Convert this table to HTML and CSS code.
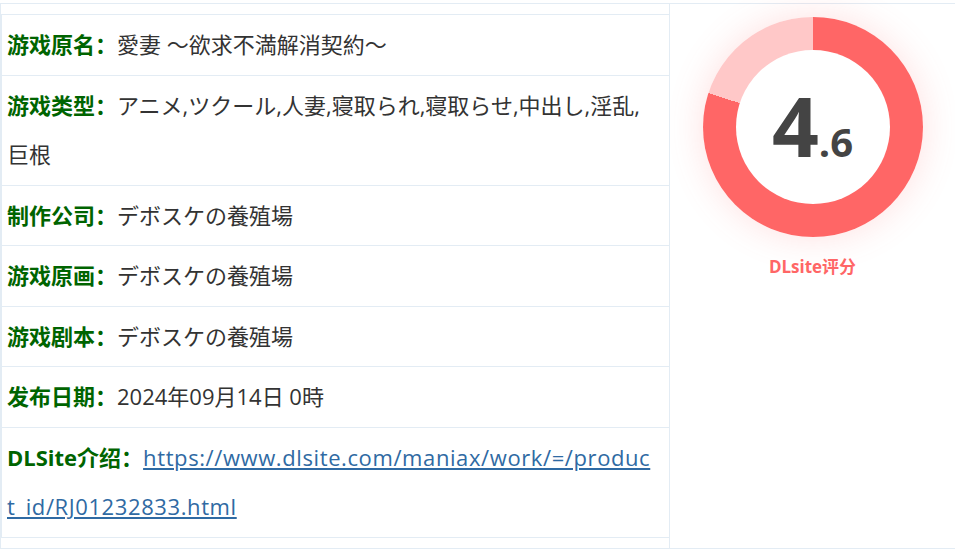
FILE: index.html
```html
<!DOCTYPE html>
<html lang="zh-CN">
<head>
	<meta charset="UTF-8">
	<meta name="viewport" content="width=device-width, initial-scale=1.0">
	<title>游戏信息</title>
	<link rel="stylesheet" href="styles.css">
</head>
<body>

	<table class="layout">
		<tr>
			<td class="layout__info">
				<table class="info">
					<tr>
						<td><span class="info__label">游戏原名：</span>愛妻 ～欲求不満解消契約～</td>
					</tr>
					<tr>
						<td><span class="info__label">游戏类型：</span>アニメ,ツクール,人妻,寝取られ,寝取らせ,中出し,淫乱,巨根</td>
					</tr>
					<tr>
						<td><span class="info__label">制作公司：</span>デボスケの養殖場</td>
					</tr>
					<tr>
						<td><span class="info__label">游戏原画：</span>デボスケの養殖場</td>
					</tr>
					<tr>
						<td><span class="info__label">游戏剧本：</span>デボスケの養殖場</td>
					</tr>
					<tr>
						<td><span class="info__label">发布日期：</span>2024年09月14日 0時</td>
					</tr>
					<tr>
						<td><span class="info__label">DLSite介绍：</span><a class="info__link" href="#">https://www.dlsite.com/maniax/work/=/product_id/RJ01232833.html</a></td>
					</tr>
				</table>
			</td>
			<td class="layout__score">
				<div class="score">
					<div class="score__ring">
						<div class="score__inner">
							<span class="score__int">4</span><span class="score__dec">.6</span>
						</div>
					</div>
					<div class="score__title">DLsite评分</div>
				</div>
			</td>
		</tr>
	</table>

</body>
</html>
```

FILE: styles.css
```css
*, *::after, *::before {
	box-sizing: border-box;
}

body {
	margin: 0;
	padding-top: 3px;
	font-family: "Open Sans", "Noto Sans CJK SC", sans-serif;
	color: #333;
	background: #fff;
	overflow: hidden;
}

.layout {
	width: 100%;
	border-collapse: collapse;
	border: 1px solid #e3ecf4;
	border-right: none;
}

.layout__info {
	width: 669px;
	padding: 10px 0 10px 0;
	vertical-align: top;
	border-right: 1px solid #e3ecf4;
}

.layout__score {
	padding: 0;
	vertical-align: top;
}

.info {
	width: 100%;
	border-collapse: collapse;
	border: 1px solid #e3ecf4;
	border-right: none;
}

.info td {
	padding: 5px 11px 5px 5px;
	font-size: 22px;
	line-height: 49.5px;
	border-bottom: 1px solid #e3ecf4;
	word-break: break-all;
}

.info__label {
	font-weight: bold;
	color: #006400;
}

.info__link {
	color: #2f6aa3;
	text-decoration: underline;
	letter-spacing: 0.6px;
}

.score {
	display: flex;
	flex-direction: column;
	align-items: center;
	padding-top: 13px;
}

.score__ring {
	display: flex;
	justify-content: center;
	align-items: center;
	width: 220px;
	height: 220px;
	border-radius: 50%;
	background: conic-gradient(#ff6666 0 80%, #ffc8c8 80% 100%);
	box-shadow: 0 0 36px rgba(255, 102, 102, 0.2);
}

.score__inner {
	display: flex;
	justify-content: center;
	align-items: baseline;
	width: 154px;
	height: 154px;
	padding-top: 34px;
	border-radius: 50%;
	background: #fff;
	color: #444;
	font-family: "Open Sans", "Noto Sans", sans-serif;
	font-weight: bold;
}

.score__int {
	font-size: 82px;
	line-height: 1;
}

.score__dec {
	font-size: 40px;
	line-height: 1;
}

.score__title {
	margin-top: 16px;
	font-size: 17px;
	font-weight: bold;
	color: #ff6666;
}
```
